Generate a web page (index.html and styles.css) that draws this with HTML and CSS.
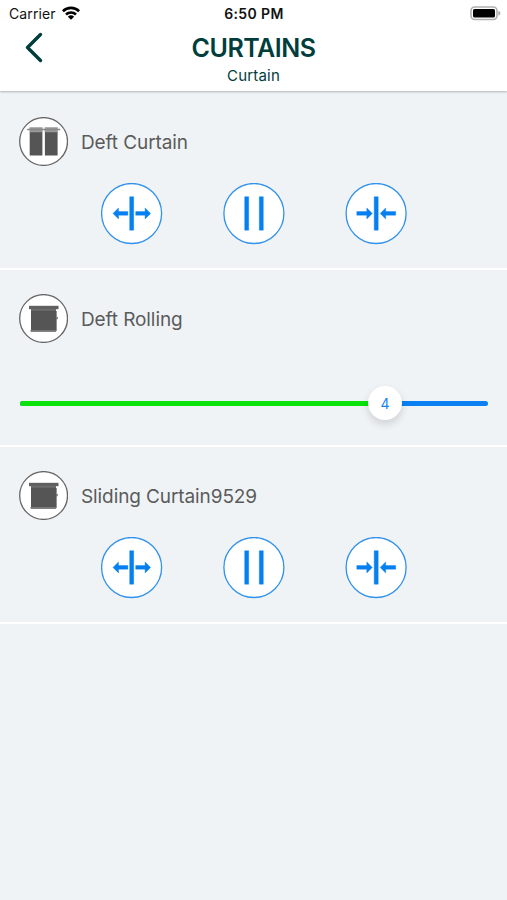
FILE: index.html
```html
<!DOCTYPE html>
<html lang="en">
<head>
<meta charset="utf-8">
<title>Curtains</title>
<link rel="stylesheet" href="styles.css">
</head>
<body>
<svg class="defs" aria-hidden="true">
  <symbol id="open" viewBox="0 0 62 62"><circle class="ring" cx="30.600" cy="30.500" r="30"/><path d="M28.700 13.700h4v33.500h-4zM12 30.400l5.500-5.500v3.700h9.400v3.600h-9.400v3.700zM49.600 30.400l-5.500-5.500v3.700h-9.400v3.600h9.400v3.700z"/></symbol>
  <symbol id="pause" viewBox="0 0 62 62"><circle class="ring" cx="30.900" cy="30.500" r="30"/><path d="M21.700 13.700h4v33.500h-4zM36.300 13.700h4v33.500h-4z"/></symbol>
  <symbol id="close" viewBox="0 0 62 62"><circle class="ring" cx="31.100" cy="30.500" r="30"/><path d="M29.200 13.700h4v33.500h-4zM27.300 30.400l-5.500-5.500v3.700h-10v3.600h10v3.700zM35.200 30.400l5.500-5.500v3.700h10v3.600h-10v3.700z"/></symbol>
  <symbol id="blind" viewBox="0 0 49 49"><circle class="rim" cx="24.600" cy="24.500" r="23.900"/><path fill="#555" d="M12 15h25v22.500H12z"/><path fill="#606060" d="M10 11.800h29.500v3.400H10z"/><path fill="#777" d="M12 15.200h25v1.3H12zM11.500 36h25.500v1.700H11.500zM37 17h.8v6h1v2.3h-1V37H37z"/></symbol>
  <symbol id="drapes" viewBox="0 0 49 49"><circle class="rim" cx="24.600" cy="24.500" r="23.900"/><path fill="#555" d="M10.700 15h12.700v23.500H10.700zM25.900 15H38.600v23.500H25.900z"/><path fill="#999" d="M10.500 10.300h13.100v5H10.500zM25.600 10.300h13.200v5H25.600z"/><path fill="#888" d="M8.200 11.700h33v1.500h-33z"/></symbol>
</svg>
<header class="header">
  <div class="status">
    <div class="carrier"><span>Carrier</span>
      <svg class="wifi" viewBox="0 0 18 14"><g fill="none" stroke="#000" stroke-width="2.600"><path d="M.9 5.200a11.600 11.600 0 0 1 16.200 0M4 8.500a7.200 7.200 0 0 1 10 0"/></g><path d="M5.900 10.700a4.500 4.500 0 0 1 6.200 0L9 13.800z"/></svg>
    </div>
    <span class="time">6:50 PM</span>
    <svg class="battery" viewBox="0 0 31 15"><rect x="1" y="1" width="26" height="12.500" rx="3.700" fill="#fff" stroke="#b0b0b0" stroke-width="1.600"/><rect x="3" y="3" width="22" height="8.600" rx="1.500"/><path fill="#aaa" d="M28.400 5c2.600.5 2.600 4 0 4.500z"/></svg>
  </div>
  <svg class="back" viewBox="0 0 20 32"><path d="M16.500 2.500 3.500 15.500l13 13" fill="none" stroke="#003d3d" stroke-width="3.400" stroke-linecap="round" stroke-linejoin="round"/></svg>
  <h1 class="title">CURTAINS</h1>
  <p class="subtitle">Curtain</p>
</header>
<main>
  <section class="device">
    <div class="device-head"><svg class="badge"><use href="#drapes"/></svg><h2 class="name">Deft Curtain</h2></div>
    <div class="controls">
      <button class="btn" aria-label="Open"><svg><use href="#open"/></svg></button>
      <button class="btn" aria-label="Pause"><svg><use href="#pause"/></svg></button>
      <button class="btn" aria-label="Close"><svg><use href="#close"/></svg></button>
    </div>
  </section>
  <section class="device">
    <div class="device-head"><svg class="badge"><use href="#blind"/></svg><h2 class="name">Deft Rolling</h2></div>
    <div class="slider"><div class="fill"></div><div class="thumb">4</div></div>
  </section>
  <section class="device">
    <div class="device-head"><svg class="badge"><use href="#blind"/></svg><h2 class="name">Sliding Curtain9529</h2></div>
    <div class="controls">
      <button class="btn" aria-label="Open"><svg><use href="#open"/></svg></button>
      <button class="btn" aria-label="Pause"><svg><use href="#pause"/></svg></button>
      <button class="btn" aria-label="Close"><svg><use href="#close"/></svg></button>
    </div>
  </section>
</main>
</body>
</html>
```
FILE: styles.css
```css
* { box-sizing: border-box; margin: 0; padding: 0; }
body { min-height: 900px; background: #eff3f6; font-family: Inter, "Liberation Sans", sans-serif; overflow: hidden; }
.defs { position: absolute; width: 0; height: 0; }
.header { position: relative; height: 91px; background: #fff; box-shadow: 0 1px 2px rgba(0,0,0,.26); text-align: center; color: #003d3d; }
.status { display: grid; grid-template-columns: 1fr auto 1fr; align-items: center; height: 27px; padding: 0 6px 0 9px; color: #111; font-size: 14px; line-height: 27px; }
.carrier { display: flex; align-items: center; gap: 6px; letter-spacing: .1px; }
.wifi { width: 18px; height: 14px; margin-top: -2px; }
.time { margin-right: 2px; font-weight: 600; font-size: 14px; letter-spacing: .4px; }
.battery { justify-self: end; width: 31px; height: 15px; margin-top: -1px; }
.back { position: absolute; left: 24px; top: 32px; width: 20px; height: 32px; }
.title { margin-top: 5px; font-size: 25px; line-height: 32px; font-weight: 600; letter-spacing: -.5px; }
.subtitle { margin-top: 2px; font-size: 15px; line-height: 20px; letter-spacing: .2px; }
main { padding-top: 2px; }
.device { height: 177px; padding: 24px 19px 0; border-bottom: 2px solid #fff; }
.device-head { display: flex; align-items: center; gap: 13px; height: 49px; }
.badge { width: 49px; height: 49px; }
.rim { fill: #fff; stroke: #666; stroke-width: 1.3px; }
.name { padding-top: 1px; font-size: 19px; font-weight: 400; color: #5b5b5b; white-space: nowrap; letter-spacing: -.1px; }
.controls { display: flex; justify-content: center; gap: 60px; margin-top: 17px; }
.btn { width: 62px; height: 62px; border: 0; background: none; }
.btn svg { display: block; width: 62px; height: 62px; fill: #0680f0; stroke: #0680f0; stroke-width: .4px; stroke-linejoin: round; }
.ring { fill: #fff; stroke: #3192ec; stroke-width: 1.3px; }
.slider { position: relative; height: 5px; margin: 58px 0 0 1px; border-radius: 3px; background: #0a80f3; }
.fill { width: 364px; height: 5px; border-radius: 3px; background: #0be20b; }
.thumb { position: absolute; left: 348px; top: -15px; width: 34px; height: 34px; border-radius: 50%; background: #fff; box-shadow: 0 4px 9px rgba(0,0,0,.14); color: #1685f0; font-size: 14px; line-height: 35px; text-align: center; }
```
